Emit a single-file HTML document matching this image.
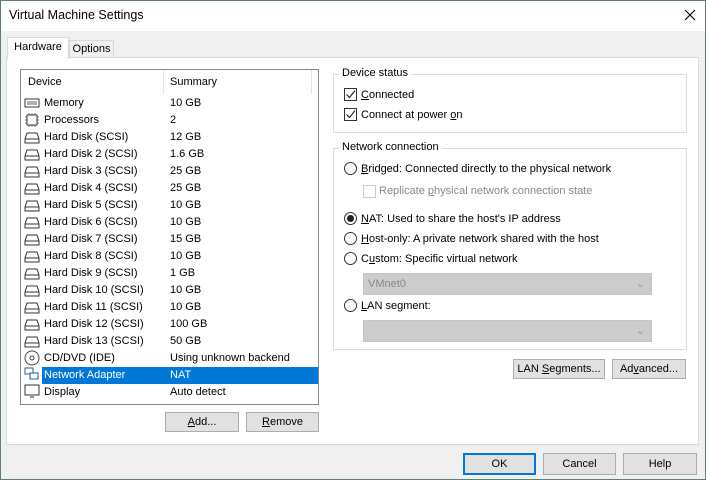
<!DOCTYPE html>
<html><head><style>
*{box-sizing:border-box;margin:0;padding:0}
body{width:706px;height:480px;overflow:hidden;font-family:"Liberation Sans",sans-serif;font-size:11px;color:#000;background:#f0f0f0;position:relative}
.a{position:absolute}
.win{left:0;top:0;width:706px;height:480px;border:1px solid #5f7e79}
.title{left:1px;top:1px;width:704px;height:30px;background:#fff}
.btn{position:absolute;background:#e1e1e1;border:1px solid #adadad;text-align:center;line-height:18px;height:20px}
u{text-decoration:underline}
.row{position:absolute;left:0;width:296px;height:17px;line-height:17px}
.row .n{position:absolute;left:22px}
.row .s{position:absolute;left:148px}
.ic{position:absolute;left:2px;top:2px;width:16px;height:13px}
.grp{position:absolute;border:1px solid #dcdcdc}
.lg{position:absolute;background:#fff;padding:0 3px;top:-8px;left:5px}
.cb{position:absolute;width:13px;height:13px;border:1px solid #333;background:#fff}
.rb{position:absolute;width:13px;height:13px;border:1px solid #333;border-radius:50%;background:#fff}
.sel{position:absolute;background:#ccc;border:1px solid #c5c5c5;height:22px;color:#888;line-height:20px;padding-left:4px}
</style></head><body>
<div class="a win"></div>
<div class="a title"></div>
<div class="a" style="left:9px;top:8px;font-size:12.5px">Virtual Machine Settings</div>
<svg class="a" style="left:684px;top:9px" width="12" height="12"><path d="M1 1L11 11M11 1L1 11" stroke="#000" stroke-width="1.2"/></svg>

<div class="a" style="left:69px;top:40px;width:45px;height:18px;background:#f0f0f0;border:1px solid #d9d9d9;border-bottom:none;text-align:center;line-height:17px">Options</div>
<div class="a" style="left:6px;top:57px;width:693px;height:388px;background:#fff;border:1px solid #d9d9d9"></div>
<div class="a" style="left:7px;top:37px;width:62px;height:22px;background:#fff;border:1px solid #d9d9d9;border-bottom:none;text-align:center;line-height:19px">Hardware</div>

<div class="a" style="left:20px;top:69px;width:299px;height:336px;border:1px solid #828790;background:#fff">
 <div class="a" style="left:7px;top:6px">Device</div>
 <div class="a" style="left:142px;top:0;width:1px;height:24px;background:#e5e5e5"></div>
 <div class="a" style="left:149px;top:6px">Summary</div>
 <div class="a" style="left:290px;top:0;width:1px;height:24px;background:#e5e5e5"></div>
 <div style="position:absolute;left:1px;top:25px;width:296px">
  <div class="row" style="top:0"><svg class="ic"><rect x="1" y="2" width="14" height="8" fill="none" stroke="#333"/><path d="M3 5h10M3 7h10" stroke="#666"/></svg><span class="n">Memory</span><span class="s">10 GB</span></div>
  <div class="row" style="top:17px"><svg class="ic" style="height:15px;top:1px"><rect x="3" y="2" width="10" height="10" fill="none" stroke="#333"/><path d="M5 0v2M8 0v2M11 0v2M5 12v2M8 12v2M11 12v2M1 4h2M1 7h2M1 10h2M13 4h2M13 7h2M13 10h2" stroke="#555"/></svg><span class="n">Processors</span><span class="s">2</span></div>
  <div id="hd"></div>
 </div>
</div>
<script>
var d=[["Hard Disk (SCSI)","12 GB"],["Hard Disk 2 (SCSI)","1.6 GB"],["Hard Disk 3 (SCSI)","25 GB"],["Hard Disk 4 (SCSI)","25 GB"],["Hard Disk 5 (SCSI)","10 GB"],["Hard Disk 6 (SCSI)","10 GB"],["Hard Disk 7 (SCSI)","15 GB"],["Hard Disk 8 (SCSI)","10 GB"],["Hard Disk 9 (SCSI)","1 GB"],["Hard Disk 10 (SCSI)","10 GB"],["Hard Disk 11 (SCSI)","10 GB"],["Hard Disk 12 (SCSI)","100 GB"],["Hard Disk 13 (SCSI)","50 GB"]];
var h="";d.forEach(function(r,i){h+='<div class="row" style="top:'+(34+i*17)+'px"><svg class="ic"><path d="M3 2h10l2 6v4H1V8z M1 8h14" fill="none" stroke="#333"/></svg><span class="n">'+r[0]+'</span><span class="s">'+r[1]+'</span></div>';});
var t=34+13*17;
h+='<div class="row" style="top:'+t+'px"><svg class="ic" style="height:16px;top:0"><circle cx="8" cy="8" r="7" fill="none" stroke="#444"/><circle cx="8" cy="8" r="2" fill="none" stroke="#444"/></svg><span class="n">CD/DVD (IDE)</span><span class="s">Using unknown backend</span></div>';
h+='<div class="row" style="top:'+(t+17)+'px"><div style="position:absolute;left:20px;top:0;width:276px;height:17px;background:#0078d7"></div><svg class="ic" style="height:16px;top:0"><rect x="1" y="1" width="8" height="6" fill="#fff" stroke="#2a5a9a"/><rect x="6" y="6" width="8" height="6" fill="#fff" stroke="#2a5a9a"/></svg><span class="n" style="color:#fff">Network Adapter</span><span class="s" style="color:#fff">NAT</span></div>';
h+='<div class="row" style="top:'+(t+34)+'px"><svg class="ic" style="height:16px;top:0"><rect x="1" y="1" width="14" height="10" fill="none" stroke="#333"/><path d="M6 13h4" stroke="#333"/></svg><span class="n">Display</span><span class="s">Auto detect</span></div>';
document.getElementById("hd").outerHTML=h;
</script>

<div class="btn" style="left:165px;top:412px;width:74px;line-height:19px"><u>A</u>dd...</div>
<div class="btn" style="left:246px;top:412px;width:73px;line-height:19px"><u>R</u>emove</div>

<div class="grp" style="left:333px;top:74px;width:354px;height:59px"><div class="lg">Device status</div></div>
<div class="cb" style="left:344px;top:88px"><svg width="11" height="11" style="position:absolute;left:0;top:0"><path d="M1.5 5.5l3 3 5.5-7" fill="none" stroke="#222" stroke-width="1.1"/></svg></div>
<div class="a" style="left:361px;top:89px"><u>C</u>onnected</div>
<div class="cb" style="left:344px;top:108px"><svg width="11" height="11" style="position:absolute;left:0;top:0"><path d="M1.5 5.5l3 3 5.5-7" fill="none" stroke="#222" stroke-width="1.1"/></svg></div>
<div class="a" style="left:361px;top:109px">Connect at power <u>o</u>n</div>

<div class="grp" style="left:333px;top:148px;width:354px;height:202px"><div class="lg">Network connection</div></div>
<div class="rb" style="left:344px;top:162px"></div>
<div class="a" style="left:361px;top:163px"><u>B</u>ridged: Connected directly to the physical network</div>
<div class="cb" style="left:363px;top:185px;border-color:#ccc"></div>
<div class="a" style="left:379px;top:185px;color:#888">Replicate <u>p</u>hysical network connection state</div>
<div class="rb" style="left:344px;top:212px"><div style="position:absolute;left:2px;top:2px;width:7px;height:7px;border-radius:50%;background:#222"></div></div>
<div class="a" style="left:361px;top:213px"><u>N</u>AT: Used to share the host's IP address</div>
<div class="rb" style="left:344px;top:232px"></div>
<div class="a" style="left:361px;top:233px"><u>H</u>ost-only: A private network shared with the host</div>
<div class="rb" style="left:344px;top:252px"></div>
<div class="a" style="left:361px;top:253px">C<u>u</u>stom: Specific virtual network</div>
<div class="sel" style="left:363px;top:273px;width:289px">VMnet0<span style="position:absolute;right:6px;top:0;color:#999">&#8964;</span></div>
<div class="rb" style="left:344px;top:299px"></div>
<div class="a" style="left:361px;top:300px"><u>L</u>AN segment:</div>
<div class="sel" style="left:363px;top:320px;width:289px"><span style="position:absolute;right:6px;top:0;color:#999">&#8964;</span></div>

<div class="btn" style="left:513px;top:359px;width:92px;line-height:19px">LAN <u>S</u>egments...</div>
<div class="btn" style="left:612px;top:359px;width:74px;line-height:19px">Ad<u>v</u>anced...</div>

<div class="btn" style="left:463px;top:453px;width:73px;height:22px;line-height:19px;border:2px solid #0078d7">OK</div>
<div class="btn" style="left:543px;top:453px;width:73px;height:22px;line-height:20px">Cancel</div>
<div class="btn" style="left:623px;top:453px;width:74px;height:22px;line-height:20px">Help</div>
</body></html>
